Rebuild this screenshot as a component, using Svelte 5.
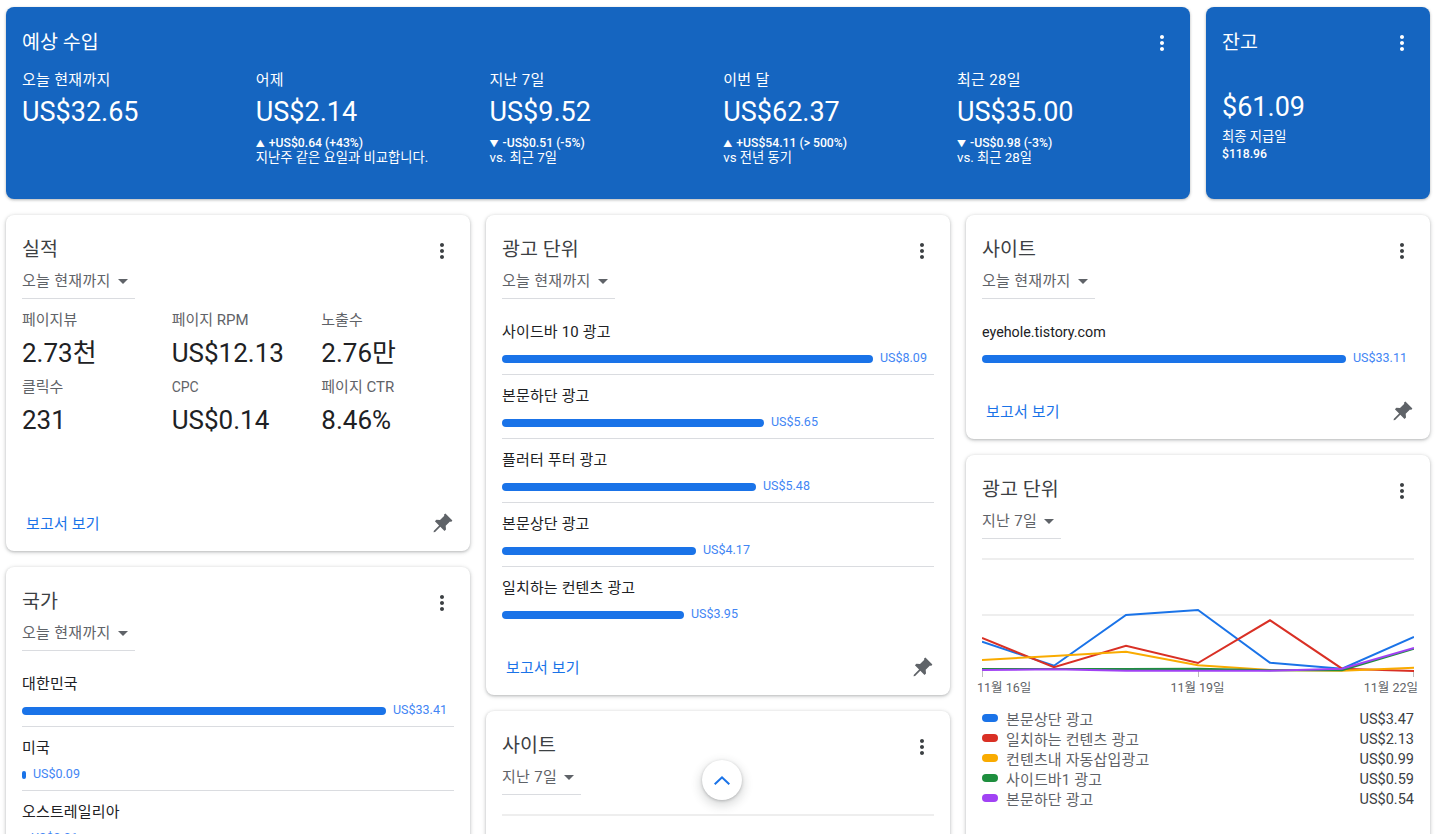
<script>
  const hero = [
    { label: '오늘 현재까지', value: 'US$32.65' },
    { label: '어제', value: 'US$2.14', tri: '▲', delta: '+US$0.64 (+43%)', note: '지난주 같은 요일과 비교합니다.' },
    { label: '지난 7일', value: 'US$9.52', tri: '▼', delta: '-US$0.51 (-5%)', note: 'vs. 최근 7일' },
    { label: '이번 달', value: 'US$62.37', tri: '▲', delta: '+US$54.11 (> 500%)', note: 'vs 전년 동기' },
    { label: '최근 28일', value: 'US$35.00', tri: '▼', delta: '-US$0.98 (-3%)', note: 'vs. 최근 28일' }
  ];
  const stats = [
    ['페이지뷰', '2.73천'], ['페이지 RPM', 'US$12.13'], ['노출수', '2.76만'],
    ['클릭수', '231'], ['CPC', 'US$0.14'], ['페이지 CTR', '8.46%']
  ];
  const countries = [['대한민국', 'US$33.41', 364], ['미국', 'US$0.09', 4], ['오스트레일리아', 'US$0.01', 2]];
  const units = [
    ['사이드바 10 광고', 'US$8.09', 371], ['본문하단 광고', 'US$5.65', 262], ['플러터 푸터 광고', 'US$5.48', 254],
    ['본문상단 광고', 'US$4.17', 194], ['일치하는 컨텐츠 광고', 'US$3.95', 182]
  ];
  const xs = [0, 72, 144, 216, 288, 360, 432];
  const series = [
    { name: '본문상단 광고', value: 'US$3.47', color: '#1a73e8', y: [82.7, 106.7, 56, 51, 103.7, 109.7, 78] },
    { name: '일치하는 컨텐츠 광고', value: 'US$2.13', color: '#d93025', y: [79, 108.3, 86.7, 104, 61.3, 109.7, 112] },
    { name: '컨텐츠내 자동삽입광고', value: 'US$0.99', color: '#f9ab00', y: [101, 97, 92.7, 106.3, 111, 111.7, 108.7] },
    { name: '사이드바1 광고', value: 'US$0.59', color: '#1e8e3e', y: [110, 110, 110, 109.7, 111.3, 111.3, 89.7] },
    { name: '본문하단 광고', value: 'US$0.54', color: '#a142f4', y: [111, 110.3, 111.7, 111.7, 111.7, 109.7, 89] }
  ];
  const pts = (y) => y.map((v, i) => `${xs[i]},${v}`).join(' ');
  const latin = (s) => /^[A-Za-z. ]+$/.test(s);
</script>

{#snippet kebab()}
  <svg class="kebab" width="24" height="24" viewBox="0 0 24 24" aria-hidden="true"><path fill="currentColor" d="M12 8c1.1 0 2-.9 2-2s-.9-2-2-2-2 .9-2 2 .9 2 2 2zm0 2c-1.1 0-2 .9-2 2s.9 2 2 2 2-.9 2-2-.9-2-2-2zm0 6c-1.1 0-2 .9-2 2s.9 2 2 2 2-.9 2-2-.9-2-2-2z"/></svg>
{/snippet}

{#snippet head(title, range)}
  <div class="head">
    <h2>{title}</h2>
    {@render kebab()}
  </div>
  <div class="select"><span>{range}</span><i class="caret"></i></div>
{/snippet}

{#snippet foot()}
  <div class="foot">
    <span class="link">보고서 보기</span>
    <svg width="24" height="24" viewBox="0 0 24 24" aria-hidden="true"><path fill="#5f6368" d="M14.4 2.6l7 7-1.3 1.3-1.1-.4-4.3 4.3.3 3.6-1.5 1.5-4.2-4.2-5.2 5.2-1.6.4.4-1.6 5.2-5.2-4.2-4.2 1.5-1.5 3.6.3 4.3-4.3-.4-1.1z"/></svg>
  </div>
{/snippet}

{#snippet rank(rows)}
  <div class="rows">
    {#each rows as r}
      <div class="row">
        <div class="name" class:latin={latin(r[0])}>{r[0]}</div>
        <div class="barline"><span class="bar" style="width:{r[2]}px"></span><span class="amt">{r[1]}</span></div>
      </div>
    {/each}
  </div>
{/snippet}

<div class="page">
  <div class="top">
    <section class="card blue hero">
      <div class="head"><h2>예상 수입</h2>{@render kebab()}</div>
      <div class="hero-grid">
        {#each hero as h}
          <div>
            <div class="h-label">{h.label}</div>
            <div class="h-value">{h.value}</div>
            {#if h.delta}
              <div class="h-delta"><span class="tri">{h.tri}</span>{h.delta}</div>
              <div class="h-note">{h.note}</div>
            {/if}
          </div>
        {/each}
      </div>
    </section>
    <section class="card blue balance">
      <div class="head"><h2>잔고</h2>{@render kebab()}</div>
      <div class="b-value">$61.09</div>
      <div class="h-note">최종 지급일</div>
      <div class="h-delta">$118.96</div>
    </section>
  </div>

  <div class="cols">
    <div class="col">
      <section class="card perf">
        {@render head('실적', '오늘 현재까지')}
        <div class="stats">
          {#each stats as s}
            <div><div class="s-label" class:latin={latin(s[0])}>{s[0]}</div><div class="s-value">{s[1]}</div></div>
          {/each}
        </div>
        {@render foot()}
      </section>
      <section class="card">
        {@render head('국가', '오늘 현재까지')}
        {@render rank(countries)}
      </section>
    </div>

    <div class="col">
      <section class="card">
        {@render head('광고 단위', '오늘 현재까지')}
        {@render rank(units)}
        {@render foot()}
      </section>
      <section class="card site7">
        {@render head('사이트', '지난 7일')}
        <div class="rule"></div>
      </section>
    </div>

    <div class="col">
      <section class="card">
        {@render head('사이트', '오늘 현재까지')}
        {@render rank([['eyehole.tistory.com', 'US$33.11', 364]])}
        {@render foot()}
      </section>
      <section class="card tall">
        {@render head('광고 단위', '지난 7일')}
        <svg class="chart" width="432" height="132" viewBox="0 -1 432 132" aria-hidden="true">
          <line x1="0" x2="432" y1="0" y2="0" stroke="#eeeeee" stroke-width="2"/>
          <line x1="0" x2="432" y1="56" y2="56" stroke="#eeeeee" stroke-width="2"/>
          {#each [0, 216, 431] as t}
            <line x1={t + 0.5} x2={t + 0.5} y1="112" y2="118" stroke="#bdbdbd"/>
          {/each}
          {#each series as s}
            <polyline points={pts(s.y)} fill="none" stroke={s.color} stroke-width="2"/>
          {/each}
        </svg>
        <div class="axis"><span>11월 16일</span><span>11월 19일</span><span>11월 22일</span></div>
        <div class="legend">
          {#each series as s}
            <div class="l-row"><i class="swatch" style="background:{s.color}"></i><span class="l-name">{s.name}</span><span class="l-val">{s.value}</span></div>
          {/each}
        </div>
      </section>
    </div>
  </div>

  <button class="up" aria-label="맨 위로">
    <svg width="24" height="24" viewBox="0 0 24 24" aria-hidden="true"><path fill="#1a73e8" d="M12 8l-8 7.6 1.4 1.4L12 10.8l6.6 6.2 1.4-1.4z"/></svg>
  </button>
</div>

<style>
  :global(body) { margin: 0; background: #fff; }
  .page {
    position: relative;
    width: 1444px;
    height: 834px;
    overflow: hidden;
    box-sizing: border-box;
    padding: 7px 14px 0 6px;
    font-family: Roboto, "Noto Sans CJK KR", sans-serif;
    color: #202124;
  }
  .top { display: flex; gap: 16px; }
  .cols { display: flex; gap: 16px; margin-top: 16px; align-items: flex-start; }
  .col { width: 464px; display: flex; flex-direction: column; gap: 16px; }
  .card {
    box-sizing: border-box;
    background: #fff;
    border-radius: 8px;
    padding: 16px;
    box-shadow: 0 1px 3px rgba(60, 64, 67, .3), 0 1px 4px 1px rgba(60, 64, 67, .1);
    display: flex;
    flex-direction: column;
  }
  .blue { background: #1565c0; color: #fff; box-shadow: 0 1px 3px rgba(60, 64, 67, .4); }
  .hero { width: 1184px; height: 192px; }
  .balance { width: 224px; height: 192px; }
  .head { display: flex; justify-content: space-between; align-items: center; height: 36px; }
  .head h2 { margin: 0; font-size: 19.5px; font-weight: 400; line-height: 34px; padding-top: 2px; color: #3c4043; }
  .blue .head h2 { line-height: 32px; padding-top: 4px; color: #fff; }
  .kebab { color: #3c4043; margin-top: 4px; }
  .blue .kebab { color: #fff; }
  .hero-grid { display: grid; grid-template-columns: repeat(5, 233.75px); margin-top: 10px; }
  .h-label { font-size: 15px; line-height: 20px; letter-spacing: .3px; padding-top: 1px; }
  .h-value { font-size: 27px; line-height: 36px; margin-top: 4px; }
  .h-delta { font-size: 12.2px; line-height: 16px; font-weight: 500; }
  .h-note { font-size: 13.3px; line-height: 16px; }
  .h-value + .h-delta { margin-top: 5px; }
  .h-delta + .h-note { margin-top: -2px; }
  .balance .h-delta { margin-top: 1px; }
  .tri { font-size: 9px; margin-right: 4px; }
  .b-value { font-size: 27px; line-height: 36px; margin-top: 30px; margin-bottom: 4px; }
  .select {
    align-self: flex-start;
    box-sizing: border-box;
    border-bottom: 1px solid #dadce0;
    height: 32px;
    padding: 0 7px 3px 0;
    font-size: 15px;
    line-height: 28px;
    letter-spacing: .3px;
    color: #5f6368;
    display: flex;
    align-items: center;
    gap: 7px;
  }
  .caret { width: 0; height: 0; border: 5px solid transparent; border-top-color: #5f6368; border-bottom-width: 0; }
  .perf { height: 336px; }
  .stats { display: grid; grid-template-columns: repeat(3, 149.67px); margin-top: 10px; row-gap: 1px; width: 432px; }
  .s-label { font-size: 15px; line-height: 22px; color: #5f6368; }
  .s-label.latin { font-size: 14px; }
  .s-value { font-size: 26px; line-height: 44px; }
  .rows { margin: 12px 0 18px; }
  .row { height: 64px; box-sizing: border-box; border-bottom: 1px solid #dadce0; padding-top: 11px; }
  .row:last-child { border-bottom: 0; }
  .name { font-size: 15px; line-height: 20px; letter-spacing: .15px; }
  .name.latin { font-size: 14.3px; letter-spacing: 0; }
  .barline { display: flex; align-items: center; gap: 7px; height: 20px; margin-top: 7px; }
  .bar { display: block; height: 8px; border-radius: 4px; background: #1a73e8; flex: none; }
  .amt { font-size: 12.5px; color: #4285f4; margin-bottom: 3px; }
  .foot { margin-top: auto; margin-bottom: -6px; display: flex; justify-content: space-between; align-items: center; height: 36px; padding-left: 4px; }
  .foot svg { margin-right: -1px; }
  .link { font-size: 15px; color: #1a73e8; letter-spacing: .15px; margin-bottom: 2px; }
  .rule { height: 2px; background: #eee; margin-top: 19px; }
  .site7 { height: 300px; }
  .chart { display: block; margin-top: 19px; }
  .axis { display: flex; justify-content: space-between; font-size: 12.5px; line-height: 16px; color: #5f6368; margin: -10px -4px 0 -5px; }
  .legend { margin-top: 12px; }
  .l-row { display: flex; align-items: center; height: 20px; font-size: 15px; }
  .swatch { width: 16px; height: 8px; border-radius: 4px; margin-right: 8px; flex: none; }
  .l-name { flex: 1; color: #5f6368; letter-spacing: .15px; }
  .l-val { color: #3c4043; font-size: 14.5px; margin-top: 3px; }
  .tall { padding-bottom: 60px; }
  .up {
    position: absolute;
    left: 702px;
    top: 760px;
    width: 40px;
    height: 40px;
    padding: 0;
    border: 0;
    border-radius: 50%;
    background: #fff;
    box-shadow: 0 1px 3px rgba(60, 64, 67, .3), 0 4px 8px 3px rgba(60, 64, 67, .15);
    display: flex;
    align-items: center;
    justify-content: center;
  }
</style>
